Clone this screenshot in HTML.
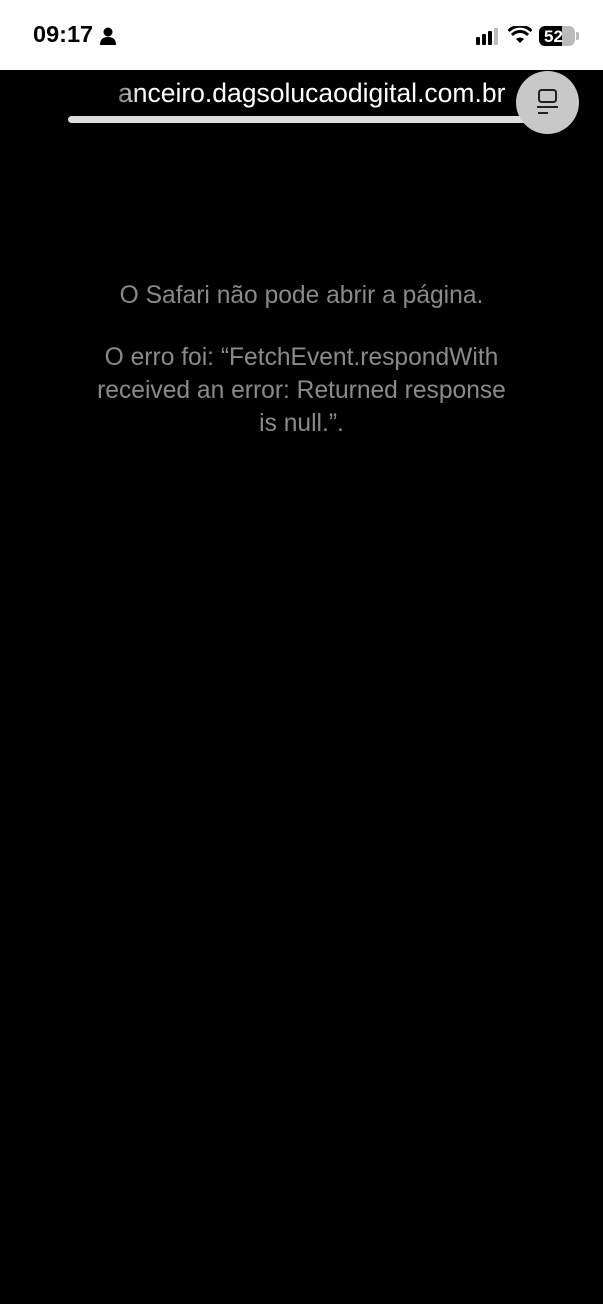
<!DOCTYPE html>
<html><head><meta charset="utf-8"><style>
html,body{margin:0;padding:0;width:603px;height:1304px;background:#000;overflow:hidden;font-family:"Liberation Sans",sans-serif}
.sb{position:absolute;left:0;top:0;width:603px;height:70px;background:#fff}
.time{position:absolute;left:33px;top:21px;font-size:23.5px;font-weight:bold;color:#000}
.url{position:absolute;left:118px;top:78px;font-size:26.5px;color:#fff;white-space:nowrap}
.fade{position:absolute;left:100px;top:76px;width:40px;height:36px;background:linear-gradient(90deg,#000,rgba(0,0,0,0))}
.bar{position:absolute;left:68px;top:116px;width:470px;height:7px;border-radius:4px;background:#ddd}
.btn{position:absolute;left:516px;top:71px;width:63px;height:63px;border-radius:50%;background:#c8c8c8}
.msg{position:absolute;left:0;width:603px;text-align:center;color:#8a8a8a;font-size:24.6px;line-height:33px}
</style></head><body>
<div class="sb">
<div class="time">09:17</div>
<svg style="position:absolute;left:100px;top:27px" width="16" height="18" viewBox="0 0 16 18"><circle cx="8" cy="5" r="4.5" fill="#000"/><path d="M0 18 Q0 10 8 10 Q16 10 16 18Z" fill="#000"/></svg>
<svg style="position:absolute;left:476px;top:28px" width="24" height="17"><rect x="0" y="9" width="4" height="8" rx="1" fill="#000"/><rect x="6" y="6" width="4" height="11" rx="1" fill="#000"/><rect x="12" y="3" width="4" height="14" rx="1" fill="#000"/><rect x="18" y="0" width="4" height="17" rx="1" fill="#bbb"/></svg>
<svg style="position:absolute;left:508px;top:26px" width="24" height="18" viewBox="0 0 24 18"><path d="M12 17 L8 13 A6 6 0 0 1 16 13Z" fill="#000"/><path d="M4 9 A11 11 0 0 1 20 9" stroke="#000" stroke-width="3" fill="none"/><path d="M0.5 5 A16 16 0 0 1 23.5 5" stroke="#000" stroke-width="3" fill="none"/></svg>
<div style="position:absolute;left:539px;top:26px;width:36px;height:20px;border-radius:6px;background:#bbb;overflow:hidden"><div style="width:23px;height:20px;background:#000"></div><span style="position:absolute;left:5px;top:1px;font-size:17px;font-weight:bold;color:#fff">52</span></div>
<div style="position:absolute;left:576px;top:32px;width:3px;height:8px;background:#bbb;border-radius:0 2px 2px 0"></div>
</div>
<div class="url">anceiro.dagsolucaodigital.com.br</div>
<div class="fade"></div>
<div class="bar"></div>
<div class="btn"><svg width="63" height="63" viewBox="0 0 63 63"><rect x="23" y="19" width="17" height="12" rx="2.5" stroke="#222" stroke-width="2" fill="none"/><line x1="21" y1="36" x2="42" y2="36" stroke="#222" stroke-width="2"/><line x1="22" y1="42" x2="32" y2="42" stroke="#222" stroke-width="2"/></svg></div>
<div class="msg" style="top:279px">O Safari não pode abrir a página.</div>
<div class="msg" style="top:341px">O erro foi: “FetchEvent.respondWith<br>received an error: Returned response<br>is null.”.</div>
</body></html>
